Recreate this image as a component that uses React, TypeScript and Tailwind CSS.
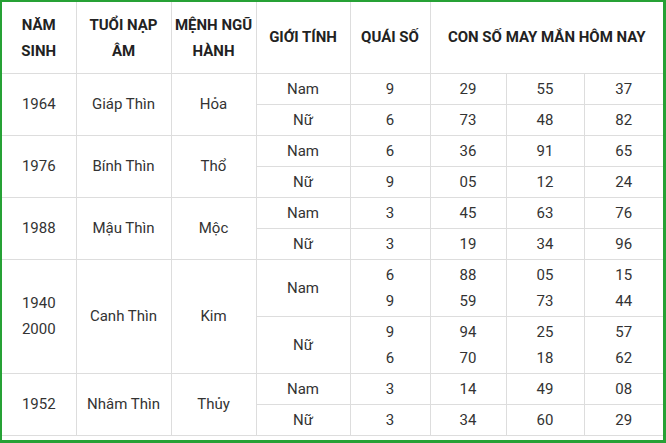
import React from "react";

type Sub = { g: string; q: string[]; n: string[][] };
type Row = { years: string[]; tuoi: string; menh: string; subs: Sub[]; h: number };

const rows: Row[] = [
  { years: ["1964"], tuoi: "Giáp Thìn", menh: "Hỏa", h: 31, subs: [
    { g: "Nam", q: ["9"], n: [["29"], ["55"], ["37"]] },
    { g: "Nữ", q: ["6"], n: [["73"], ["48"], ["82"]] },
  ] },
  { years: ["1976"], tuoi: "Bính Thìn", menh: "Thổ", h: 31, subs: [
    { g: "Nam", q: ["6"], n: [["36"], ["91"], ["65"]] },
    { g: "Nữ", q: ["9"], n: [["05"], ["12"], ["24"]] },
  ] },
  { years: ["1988"], tuoi: "Mậu Thìn", menh: "Mộc", h: 31, subs: [
    { g: "Nam", q: ["3"], n: [["45"], ["63"], ["76"]] },
    { g: "Nữ", q: ["3"], n: [["19"], ["34"], ["96"]] },
  ] },
  { years: ["1940", "2000"], tuoi: "Canh Thìn", menh: "Kim", h: 57, subs: [
    { g: "Nam", q: ["6", "9"], n: [["88", "59"], ["05", "73"], ["15", "44"]] },
    { g: "Nữ", q: ["9", "6"], n: [["94", "70"], ["25", "18"], ["57", "62"]] },
  ] },
  { years: ["1952"], tuoi: "Nhâm Thìn", menh: "Thủy", h: 31, subs: [
    { g: "Nam", q: ["3"], n: [["14"], ["49"], ["08"]] },
    { g: "Nữ", q: ["3"], n: [["34"], ["60"], ["29"]] },
  ] },
];

const cell = "border-b border-r border-[#dddddd] text-center align-middle p-0 leading-[26px]";
const lastCell = "border-b border-[#dddddd] text-center align-middle p-0 leading-[26px]";

function Lines({ items }: { items: string[] }) {
  return (
    <>
      {items.map((t, i) => (
        <div key={i}>{t}</div>
      ))}
    </>
  );
}

export default function App() {
  return (
    <div
      className="w-[666px] h-[443px] bg-white border-t-2 border-l-2 border-r-[3px] border-b-[3px] border-[#26a135] overflow-hidden"
      style={{ fontFamily: "Roboto, 'Noto Sans', sans-serif" }}
    >
      <table className="w-[661px] border-collapse table-fixed text-[15px] text-[#333333]">
        <colgroup>
          <col className="w-[74px]" />
          <col className="w-[95px]" />
          <col className="w-[85px]" />
          <col className="w-[94px]" />
          <col className="w-[80px]" />
          <col className="w-[76px]" />
          <col className="w-[78px]" />
          <col className="w-[79px]" />
        </colgroup>
        <thead>
          <tr className="h-[71px] font-bold text-[#222222]">
            <th className={cell + " pt-[2px]"}>NĂM<br />SINH</th>
            <th className={cell + " pt-[2px]"}>TUỔI NẠP<br />ÂM</th>
            <th className={cell + " pt-[2px]"}>MỆNH NGŨ<br />HÀNH</th>
            <th className={cell}>GIỚI TÍNH</th>
            <th className={cell}>QUÁI SỐ</th>
            <th colSpan={3} className={lastCell}>CON SỐ MAY MẮN HÔM NAY</th>
          </tr>
        </thead>
        <tbody>
          {rows.map((r) =>
            r.subs.map((s, si) => (
              <tr key={r.tuoi + si} style={{ height: r.h }}>
                {si === 0 && (
                  <>
                    <td rowSpan={2} className={cell}><Lines items={r.years} /></td>
                    <td rowSpan={2} className={cell}>{r.tuoi}</td>
                    <td rowSpan={2} className={cell}>{r.menh}</td>
                  </>
                )}
                <td className={cell}>{s.g}</td>
                <td className={cell}><Lines items={s.q} /></td>
                <td className={cell}><Lines items={s.n[0]} /></td>
                <td className={cell}><Lines items={s.n[1]} /></td>
                <td className={lastCell}><Lines items={s.n[2]} /></td>
              </tr>
            ))
          )}
        </tbody>
      </table>
    </div>
  );
}
